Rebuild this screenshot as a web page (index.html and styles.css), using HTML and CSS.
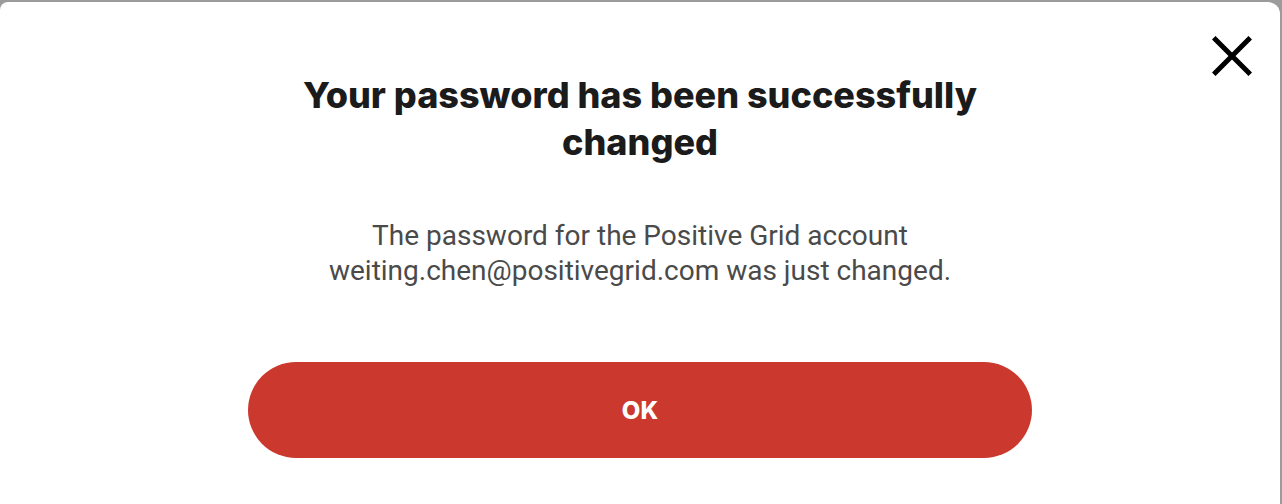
FILE: index.html
```html
<!DOCTYPE html>
<html>
<head>
<meta charset="utf-8">
<link rel="stylesheet" href="styles.css">
</head>
<body>
<div class="dialog">
  <button class="close" aria-label="Close">
    <svg width="40" height="40" viewBox="0 0 40 40"><path d="M3.5 3.5 L36.5 36.5 M36.5 3.5 L3.5 36.5" stroke="#000" stroke-width="5" stroke-linecap="square" fill="none"/></svg>
  </button>
  <h1 class="title">Your password has been successfully<br>changed</h1>
  <p class="message">The password for the Positive Grid account<br>weiting.chen@positivegrid.com was just changed.</p>
  <button class="ok">OK</button>
</div>
</body>
</html>
```
FILE: styles.css
```css
html, body {
  margin: 0;
  padding: 0;
}
body {
  background: #9b9b9b;
  padding: 2px 2px 0 0;
  height: 504px;
  box-sizing: border-box;
  overflow: hidden;
}
.dialog {
  position: relative;
  background: #fff;
  border-radius: 8px 12px 0 0;
  height: 502px;
  display: flex;
  flex-direction: column;
  align-items: center;
  padding-top: 70px;
  box-sizing: border-box;
}
.close {
  position: absolute;
  top: 34px;
  right: 28px;
  background: none;
  border: 0;
  padding: 0;
  width: 40px;
  height: 40px;
}
.close svg { display: block; }
.title {
  margin: 0;
  font-family: "Inter", "Liberation Sans", sans-serif;
  font-weight: 800;
  font-size: 36px;
  line-height: 47px;
  color: #1b1b1b;
  text-align: center;
}
.message {
  margin: 52px 0 0;
  font-family: Roboto, "Liberation Sans", sans-serif;
  font-size: 28px;
  line-height: 35px;
  color: #4a4a4a;
  text-align: center;
}
.ok {
  margin-top: 74px;
  width: 784px;
  height: 96px;
  flex-shrink: 0;
  border: 0;
  border-radius: 48px;
  background: #cb392e;
  color: #fff;
  font-family: "Inter", "Liberation Sans", sans-serif;
  font-weight: 800;
  font-size: 24px;
}
```
